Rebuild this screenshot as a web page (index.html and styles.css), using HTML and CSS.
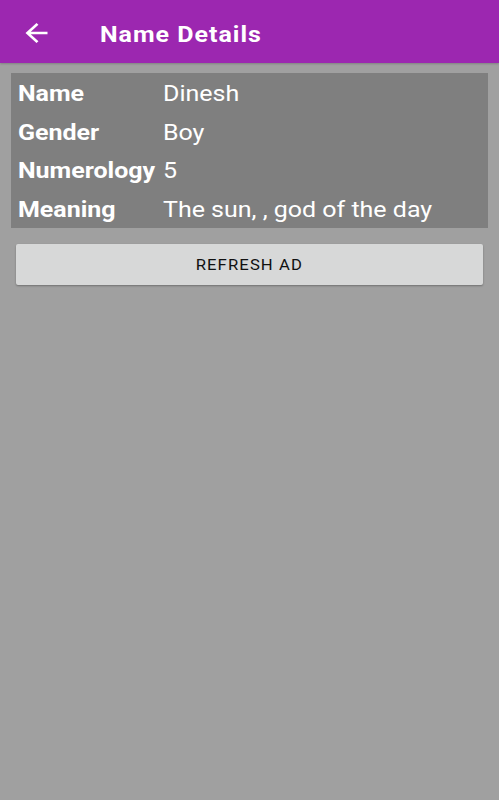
FILE: index.html
```html
<!DOCTYPE html>
<html lang="en">
<head>
    <meta charset="UTF-8">
    <meta name="viewport" content="width=device-width, initial-scale=1.0">
    <title>Name Details</title>
    <link rel="stylesheet" href="styles.css">
</head>
<body>
    <div class="toolbar">
        <svg class="back" viewBox="0 0 24 24" preserveAspectRatio="none">
            <path d="M20 11H7.83l5.59-5.59L12 4l-8 8 8 8 1.41-1.41L7.83 13H20v-2z" fill="#fff"/>
        </svg>
        <h1><span class="wide">Name Details</span></h1>
    </div>

    <div class="content">
        <!-- Details table -->
        <div class="details">
            <div class="row">
                <span class="label"><span class="wide">Name</span></span>
                <span class="value wide">Dinesh</span>
            </div>
            <div class="row">
                <span class="label"><span class="wide">Gender</span></span>
                <span class="value wide">Boy</span>
            </div>
            <div class="row">
                <span class="label"><span class="wide">Numerology</span></span>
                <span class="value wide">5</span>
            </div>
            <div class="row">
                <span class="label"><span class="wide">Meaning</span></span>
                <span class="value wide">The sun, , god of the day</span>
            </div>
        </div>

        <button class="refresh"><span class="wide">Refresh Ad</span></button>
    </div>
</body>
</html>
```

FILE: styles.css
```css
html {
    background: #a0a0a0;
}

body {
    margin: 0;
    font-family: Roboto, "Liberation Sans", sans-serif;
    color: #fff;
}

/* text on the device is a little wider than tall */
.wide {
    display: inline-block;
    transform: scaleX(1.11);
    transform-origin: left center;
    white-space: nowrap;
}

.toolbar {
    height: 59px;
    padding-top: 4px;
    background: #9c27b0;
    display: flex;
    align-items: center;
    box-shadow: 0 1px 2px rgba(0, 0, 0, 0.2);
}

.back {
    width: 33px;
    height: 30px;
    margin-left: 20px;
    margin-top: -2px;
}

.toolbar h1 {
    margin: 0 0 0 47px;
    font-size: 22.5px;
    font-weight: 700;
    letter-spacing: 0.9px;
}

.content {
    padding: 10px 11px;
}

.details {
    background: #7f7f7f;
    padding: 1px 7px 0;
    height: 154px;
    overflow: hidden;
}

.row {
    display: flex;
    line-height: 38.7px;
    font-size: 22.5px;
}

.label {
    width: 145px;
    flex-shrink: 0;
    font-weight: 700;
}

.value {
    font-weight: 400;
}

.refresh {
    display: flex;
    align-items: center;
    justify-content: center;
    width: calc(100% - 10px);
    margin: 16px 5px 0;
    height: 41px;
    padding: 0;
    background: #d7d8d8;
    border: none;
    border-radius: 2px;
    box-shadow: 0 1px 2px rgba(0, 0, 0, 0.3);
    font-family: Roboto, "Liberation Sans", sans-serif;
    font-size: 15px;
    text-transform: uppercase;
    letter-spacing: 1px;
    color: #111;
}

.refresh .wide {
    transform-origin: center;
}
```
